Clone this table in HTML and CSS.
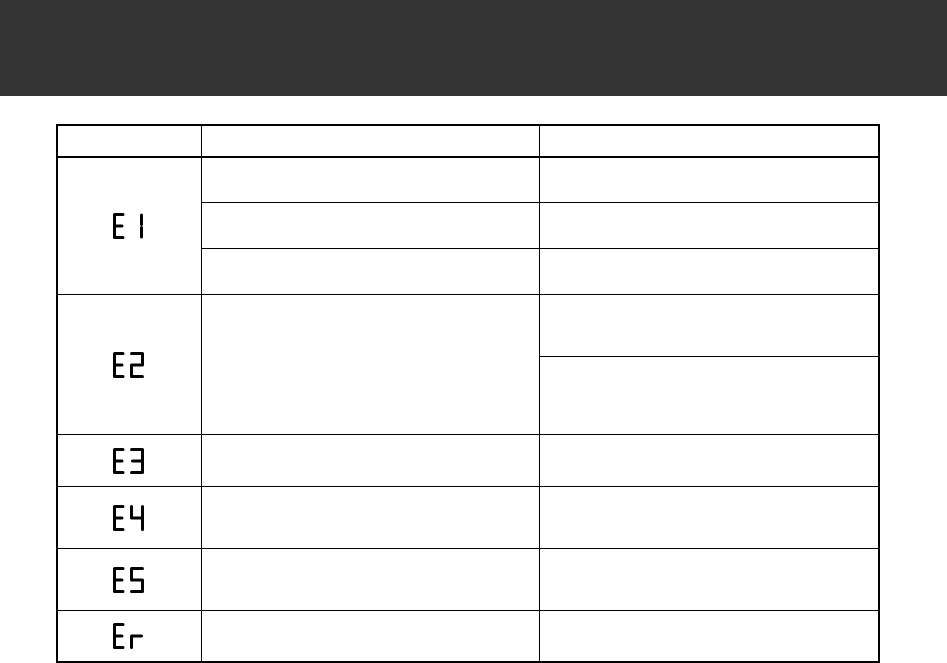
FILE: index.html
```html
<!DOCTYPE html>
<html lang="en">
<head>
<meta charset="utf-8">
<title>Error codes</title>
<link rel="stylesheet" href="styles.css">
</head>
<body>
<header class="topbar"></header>
<main class="content">
  <div class="codes">
    <div class="cell head"></div>
    <div class="cell head"></div>
    <div class="cell head"></div>

    <div class="cell code span3">
      <svg class="seg" width="31" height="26" viewBox="0 0 31 26"><path d="M10 1.5H1.5V24.5H10M1.5 13H9"/><path d="M28.5 2V11.5M28.5 14.5V24"/></svg>
    </div>
    <div class="cell"></div><div class="cell"></div>
    <div class="cell"></div><div class="cell"></div>
    <div class="cell"></div><div class="cell"></div>

    <div class="cell code span2">
      <svg class="seg" width="31" height="26" viewBox="0 0 31 26"><path d="M10 1.5H1.5V24.5H10M1.5 13H9"/><path d="M18.5 1.5H29.5V13H18.5V24.5H29.5"/></svg>
    </div>
    <div class="cell span2"></div>
    <div class="cell"></div>
    <div class="cell"></div>

    <div class="cell code">
      <svg class="seg" width="31" height="26" viewBox="0 0 31 26"><path d="M10 1.5H1.5V24.5H10M1.5 13H9"/><path d="M18.5 1.5H29.5V24.5H18.5M19.5 13H29.5"/></svg>
    </div>
    <div class="cell"></div><div class="cell"></div>

    <div class="cell code">
      <svg class="seg" width="31" height="26" viewBox="0 0 31 26"><path d="M10 1.5H1.5V24.5H10M1.5 13H9"/><path d="M18.5 1.5V13H29.5M29.5 1.5V24.5"/></svg>
    </div>
    <div class="cell"></div><div class="cell"></div>

    <div class="cell code">
      <svg class="seg" width="31" height="26" viewBox="0 0 31 26"><path d="M10 1.5H1.5V24.5H10M1.5 13H9"/><path d="M29.5 1.5H18.5V13H29.5V24.5H18.5"/></svg>
    </div>
    <div class="cell"></div><div class="cell"></div>

    <div class="cell code">
      <svg class="seg" width="31" height="26" viewBox="0 0 31 26"><path d="M10 1.5H1.5V24.5H10M1.5 13H9"/><path d="M18.5 24.5V13H28.5"/></svg>
    </div>
    <div class="cell"></div><div class="cell"></div>
  </div>
</main>
</body>
</html>
```

FILE: styles.css
```css
html, body {
  margin: 0;
  padding: 0;
  background: #ffffff;
  font-family: "Liberation Sans", Arial, sans-serif;
}

.topbar {
  height: 96px;
  background: #333333;
}

.content {
  padding: 28px 0 0 56px;
}

.codes {
  display: grid;
  width: 820px;
  grid-template-columns: 143px 337px 338px;
  grid-template-rows: 31px 44px 45px 45px 61px 77px 51px 61px 61px 50px;
  gap: 1px;
  background: #000000;
  border: 2px solid #000000;
}

.cell {
  background: #ffffff;
}

.cell.head {
  border-bottom: 1px solid #000000;
}

.cell.code {
  display: flex;
  align-items: center;
  justify-content: center;
  padding-right: 2px;
}

.span3 {
  grid-row: span 3;
}

.span2 {
  grid-row: span 2;
}

.seg {
  display: block;
  fill: none;
  stroke: #000000;
  stroke-width: 3;
  stroke-linejoin: round;
  stroke-linecap: round;
}
```
